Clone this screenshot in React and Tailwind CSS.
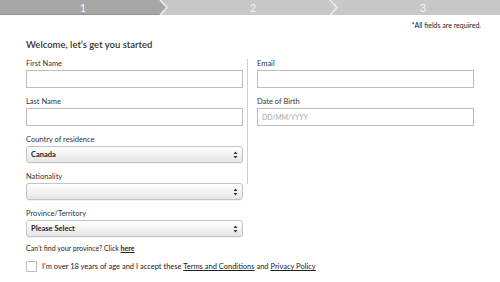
import React from "react";

const font = { fontFamily: "Lato, 'Noto Sans', sans-serif" };

// small up/down arrows for the selects
const UpDown = () => (
  <svg width="5" height="8" viewBox="0 0 5 8" className="absolute right-[4px] top-[4px]">
    <path d="M0.5 3 L2.5 0.5 L4.5 3 Z" fill="#333" />
    <path d="M0.5 5 L2.5 7.5 L4.5 5 Z" fill="#333" />
  </svg>
);

const Chevron = ({ left }) => (
  <svg width="12" height="15" viewBox="0 0 12 15" className="absolute top-0" style={{ left }}>
    <polyline points="1,0 8,7.5 1,15" fill="none" stroke="#eeeeee" strokeWidth="1.6" />
  </svg>
);

function Label({ children }) {
  return <div className="text-[7.5px] leading-[10px] text-[#333] mb-[1px]">{children}</div>;
}

function TextField({ label, placeholder }) {
  return (
    <div>
      <Label>{label}</Label>
      <div className="h-[18px] border border-[#bdbdbd] bg-white px-[4px] flex items-center">
        {placeholder && <span className="text-[7px] text-[#aaa] tracking-tight">{placeholder}</span>}
      </div>
    </div>
  );
}

function SelectField({ label, value }) {
  return (
    <div>
      <Label>{label}</Label>
      <div className="relative h-[17px] rounded-[3px] border border-[#c4c4c4] bg-gradient-to-b from-white to-[#e6e6e6] px-[4px] flex items-center shadow-[0_1px_0_rgba(0,0,0,0.05)]">
        {value && <span className="text-[7.5px] font-bold text-[#222]">{value}</span>}
        <UpDown />
      </div>
    </div>
  );
}

export default function App() {
  return (
    <div className="w-[500px] h-[282px] bg-white overflow-hidden" style={font}>
      {/* steps */}
      <div className="relative flex h-[15px] text-[11px] leading-[15px] text-[#f4f4f4]">
        <div className="w-[160px] bg-[#a6a6a6] border-b border-[#909090] text-center pl-[6px]">1</div>
        <div className="w-[170px] bg-[#c8c8c8] text-center pl-[16px]">2</div>
        <div className="flex-1 bg-[#c8c8c8] text-center pl-[16px]">3</div>
        <svg width="10" height="15" viewBox="0 0 10 15" className="absolute top-0 left-[160px]">
          <polygon points="0,0 0.5,0 7.5,7.5 0.5,15 0,15" fill="#a6a6a6" />
        </svg>
        <Chevron left={159} />
        <Chevron left={329} />
      </div>

      <div className="text-right text-[7px] text-[#222] pr-[19px] mt-[6px] leading-[8px]">*All fields are required.</div>

      <div className="px-[26px]">
        <div className="text-[9.5px] font-semibold text-[#333] mt-[10px] leading-[12px]">Welcome, let’s get you started</div>

        <div className="flex mt-[8px]">
          <div className="w-[218px] flex flex-col gap-[9px]">
            <TextField label="First Name" />
            <TextField label="Last Name" />
            <SelectField label="Country of residence" value="Canada" />
            <SelectField label="Nationality" />
            <SelectField label="Province/Territory" value="Please Select" />
          </div>
          <div className="ml-[4px] w-px h-[125px] bg-[#cfcfcf]" />
          <div className="ml-[9px] w-[218px] flex flex-col gap-[9px]">
            <TextField label="Email" />
            <TextField label="Date of Birth" placeholder="DD/MM/YYYY" />
          </div>
        </div>

        <div className="mt-[7px] text-[7px] leading-[9px] text-[#222]">
          Can’t find your province? Click <span className="font-bold underline">here</span>
        </div>

        <div className="flex items-center mt-[8px]">
          <div className="w-[11px] h-[11px] border border-[#bbb] rounded-[1px] bg-white" />
          <div className="ml-[5px] text-[7.5px] text-[#222]">
            I’m over 18 years of age and I accept these <span className="underline">Terms and Conditions</span> and{" "}
            <span className="underline">Privacy Policy</span>
          </div>
        </div>
      </div>
    </div>
  );
}
